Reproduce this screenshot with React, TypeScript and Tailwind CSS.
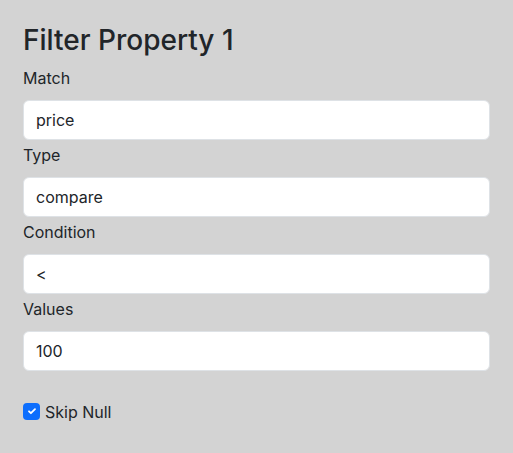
import React from "react";

const fields = [
  { label: "Match", value: "price" },
  { label: "Type", value: "compare" },
  { label: "Condition", value: "<" },
  { label: "Values", value: "100" },
];

export default function App() {
  return (
    <div
      className="min-h-[453px] w-full bg-[#d3d3d3] px-[23px] pt-[23px] text-[#212529]"
      style={{ fontFamily: "Inter, 'Noto Sans', sans-serif" }}
    >
      <h3 className="m-0 mb-[6px] text-[28px] font-medium leading-[34px]">Filter Property 1</h3>
      {fields.map((f) => (
        <div key={f.label}>
          <div className="pt-[3px] pb-[10px] text-[16px] leading-[24px]">{f.label}</div>
          <input
            readOnly
            value={f.value}
            className="block h-[40px] w-full rounded-[6px] border border-[#dee2e6] bg-white px-[12px] text-[16px] text-[#212529] outline-none"
          />
        </div>
      ))}
      <div className="mt-[29px] flex items-center gap-[5px] text-[16px] leading-[24px]">
        <span className="flex h-[17px] w-[17px] -translate-y-[1px] items-center justify-center rounded-[4px] bg-[#0d6efd]">
          <svg width="12" height="12" viewBox="0 0 20 20" fill="none">
            <path d="M5 10.5l3.2 3.2L15 7" stroke="white" strokeWidth="3" strokeLinecap="round" strokeLinejoin="round" />
          </svg>
        </span>
        <span>Skip Null</span>
      </div>
    </div>
  );
}
